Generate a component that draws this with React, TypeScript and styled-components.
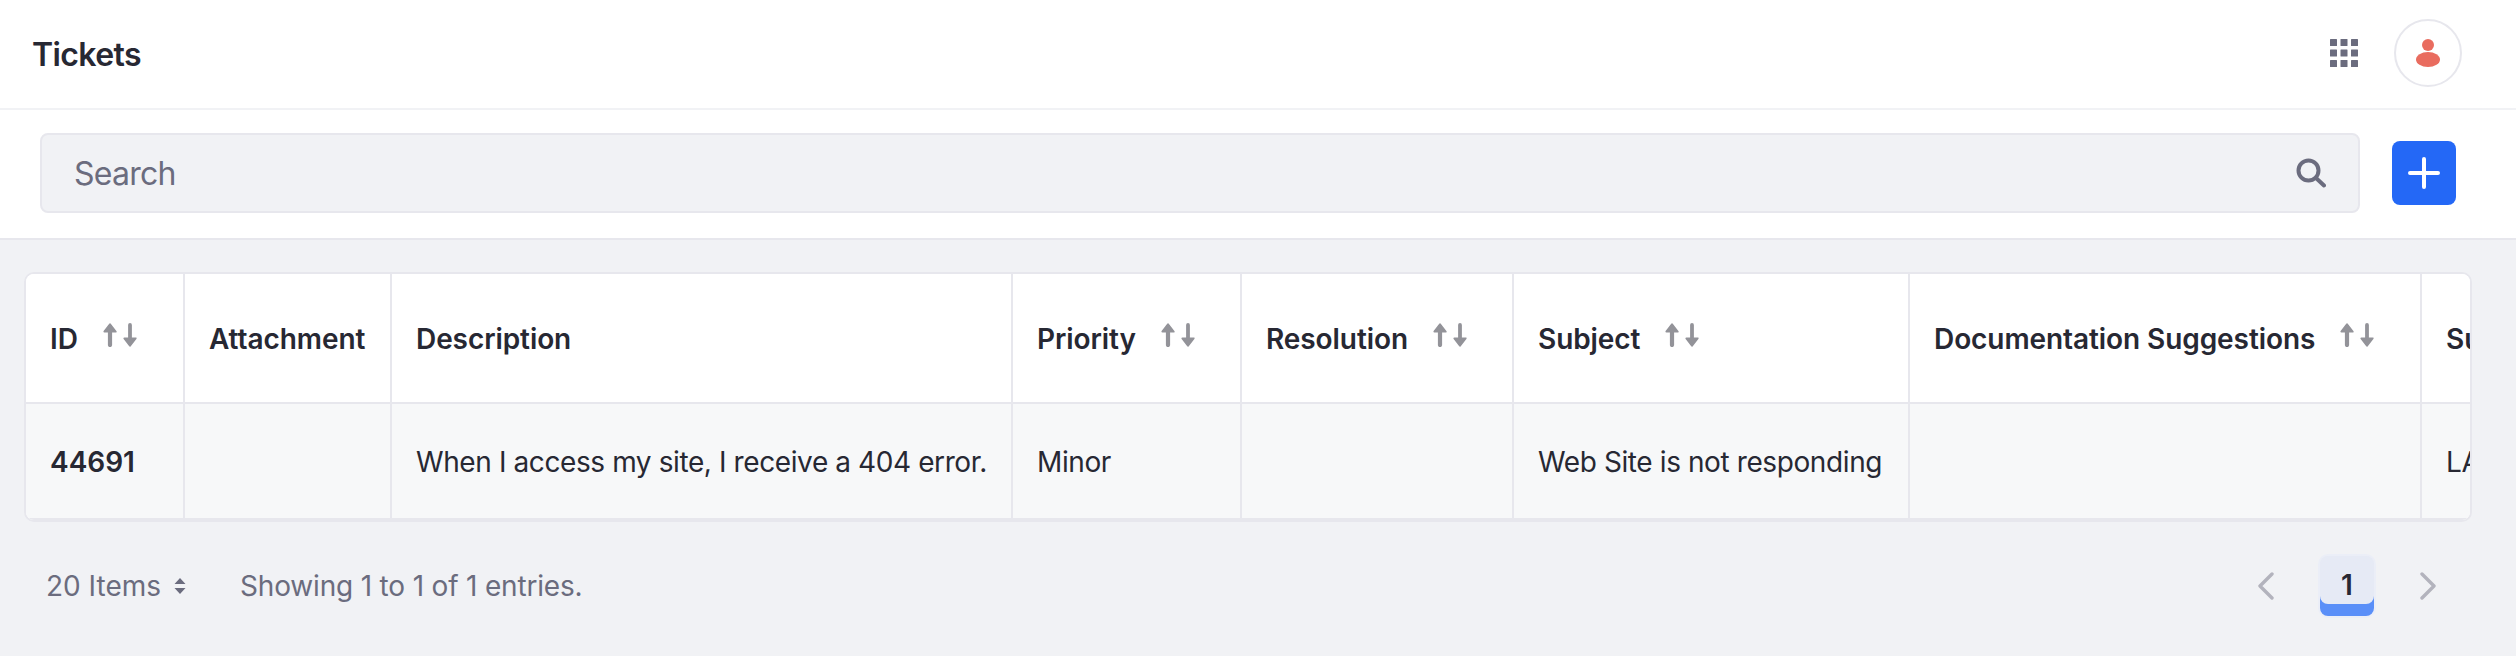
import React from "react";
import styled, { createGlobalStyle } from "styled-components";

const Global = createGlobalStyle`
  html, body { margin: 0; padding: 0; background: #f1f2f5; }
  * { box-sizing: border-box; }
  body { font-family: Inter, "Liberation Sans", sans-serif; color: #272833; overflow: hidden; }
`;

const Page = styled.div`
  width: 2516px;
  height: 656px;
  overflow: hidden;
  background: #f1f2f5;
`;

const TopBar = styled.header`
  height: 110px;
  padding: 0 54px 2px 32px;
  display: flex;
  align-items: center;
  justify-content: space-between;
  background: #fff;
  border-bottom: 2px solid #f1f2f5;
`;

const Title = styled.h1`
  margin: 4px 0 0;
  font-size: 32px;
  font-weight: 600;
  line-height: 1;
  letter-spacing: -0.6px;
`;

const TopActions = styled.div`
  display: flex;
  align-items: center;
  gap: 36px;
`;

const Avatar = styled.div`
  width: 68px;
  height: 68px;
  border: 2px solid #e7e7ed;
  border-radius: 50%;
  display: flex;
  align-items: center;
  justify-content: center;
  background: #fff;
`;

const SearchBar = styled.div`
  height: 130px;
  padding: 23px 60px 25px 40px;
  display: flex;
  align-items: center;
  gap: 32px;
  background: #fff;
  border-bottom: 2px solid #e7e7ed;
`;

const SearchField = styled.div`
  flex: 1;
  height: 80px;
  padding: 0 32px 0 32px;
  display: flex;
  align-items: center;
  justify-content: space-between;
  background: #f1f2f5;
  border: 2px solid #e7e7ed;
  border-radius: 8px;
`;

const Placeholder = styled.span`
  font-size: 32px;
  line-height: 1;
  letter-spacing: -0.75px;
  color: #6b6c7e;
  margin-top: 1px;
`;

const AddButton = styled.button`
  width: 64px;
  height: 64px;
  padding: 0;
  border: 0;
  border-radius: 8px;
  background: #2468f6;
  display: flex;
  align-items: center;
  justify-content: center;
`;

const Content = styled.main`
  padding: 32px 44px 0 24px;
`;

const TableFrame = styled.div`
  width: 2448px;
  overflow: hidden;
  background: #fff;
  border: 2px solid #e7e7ed;
  border-radius: 10px;
`;

const Table = styled.table`
  width: 2796px;
  table-layout: fixed;
  border-collapse: separate;
  border-spacing: 0;
`;

const HeadCell = styled.th`
  height: 130px;
  padding: 3px 0 0 24px;
  text-align: left;
  vertical-align: middle;
  font-size: 28px;
  font-weight: 600;
  line-height: 1.2;
  letter-spacing: -0.08px;
  white-space: nowrap;
  overflow: hidden;
  background: #fff;
  border-right: 2px solid #e7e7ed;
  border-bottom: 2px solid #e7e7ed;
`;

const BodyCell = styled.td<{ $strong?: boolean }>`
  height: 116px;
  padding: 3px 0 0 24px;
  vertical-align: middle;
  font-size: 28px;
  font-weight: ${(p) => (p.$strong ? 600 : 400)};
  letter-spacing: ${(p) => (p.$strong ? "0" : "-0.4px")};
  line-height: 1.2;
  white-space: nowrap;
  overflow: hidden;
  background: #f7f8f9;
  border-right: 2px solid #e7e7ed;
  border-bottom: 2px solid #e7e7ed;
`;

const HeadInner = styled.span`
  display: inline-flex;
  align-items: center;
  gap: 25px;
`;

const SortSvg = styled.svg`
  display: block;
  margin-top: -9px;
  flex: none;
`;

const Footer = styled.footer`
  padding: 32px 36px 0 22px;
  display: flex;
  align-items: center;
  justify-content: space-between;
`;

const Summary = styled.div`
  display: flex;
  align-items: center;
  gap: 54px;
  font-size: 28px;
  line-height: 1;
  color: #6b6c7e;
`;

const ItemsSelect = styled.span`
  display: inline-flex;
  align-items: center;
  gap: 13px;
`;

const EntriesText = styled.span`
  letter-spacing: -0.18px;
`;

const Pager = styled.nav`
  display: flex;
  align-items: center;
  gap: 44px;
`;

const PageNumber = styled.div`
  position: relative;
  width: 54px;
  height: 60px;
  margin: 2px;
  border-radius: 8px;
  background: linear-gradient(#e6eaf5 50%, #5a8ff8 50%);
  box-shadow: 0 0 0 2px #ebeef7;
  font-size: 28px;
  font-weight: 600;
  color: #272833;
`;

const PageFace = styled.span`
  display: flex;
  align-items: center;
  justify-content: center;
  height: 48px;
  padding-top: 10px;
  border-radius: 8px;
  background: #e6eaf5;
`;

const SortIcon = () => (
  <SortSvg width="34" height="24" viewBox="0 0 34 24" fill="none" stroke="#939399" strokeLinecap="round" strokeLinejoin="round" aria-hidden="true">
    <path d="M7 22V4" strokeWidth="4.2" />
    <path d="M1.4 8.6 7 1.4 12.6 8.6Z" fill="#939399" strokeWidth="2" />
    <path d="M27 2v18" strokeWidth="3.8" />
    <path d="M21.4 15.4 27 22.6 32.6 15.4Z" fill="#939399" strokeWidth="2" />
  </SortSvg>
);

const GridIcon = () => (
  <svg width="28" height="28" viewBox="0 0 28 28" fill="#6b6c7e" aria-hidden="true">
    {[0, 10.5, 21].map((y) =>
      [0, 10.5, 21].map((x) => <rect key={`${x}-${y}`} x={x} y={y} width="7" height="7" rx="0.5" />)
    )}
  </svg>
);

const PersonIcon = () => (
  <svg width="24" height="28" viewBox="0 0 24 28" fill="#e96c5f" aria-hidden="true">
    <circle cx="12" cy="6" r="6" />
    <ellipse cx="12" cy="20.5" rx="12" ry="7.5" />
  </svg>
);

const SearchIcon = () => (
  <svg width="30" height="30" viewBox="0 0 30 30" fill="none" stroke="#6b6c7e" strokeWidth="4" strokeLinecap="round" aria-hidden="true">
    <circle cx="12.5" cy="12.5" r="10" />
    <path d="M20 20l8 7.5" />
  </svg>
);

const PlusIcon = () => (
  <svg width="32" height="32" viewBox="0 0 32 32" fill="none" stroke="#fff" strokeWidth="4" strokeLinecap="round" aria-hidden="true">
    <path d="M16 2v28M2 16h28" />
  </svg>
);

const Chevron = ({ dir }: { dir: "left" | "right" }) => (
  <svg width="16" height="28" viewBox="0 0 16 28" fill="none" stroke="#b3b3bd" strokeWidth="3.4" strokeLinecap="round" strokeLinejoin="round" aria-hidden="true">
    <path d={dir === "left" ? "M14 2 2 14l12 12" : "M2 2l12 12L2 26"} />
  </svg>
);

const CaretIcon = () => (
  <svg width="12" height="16" viewBox="0 0 12 16" fill="#6b6c7e" aria-hidden="true">
    <path d="M6 0 11.5 6H.5ZM6 16 .5 10h11Z" />
  </svg>
);

const columns = [
  { label: "ID", width: 159, sort: true, value: "44691", strong: true },
  { label: "Attachment", width: 207, sort: false, value: "" },
  { label: "Description", width: 621, sort: false, value: "When I access my site, I receive a 404 error." },
  { label: "Priority", width: 229, sort: true, value: "Minor" },
  { label: "Resolution", width: 272, sort: true, value: "" },
  { label: "Subject", width: 396, sort: true, value: "Web Site is not responding" },
  { label: "Documentation Suggestions", width: 512, sort: true, value: "" },
  { label: "Support Region", width: 400, sort: false, value: "LATAM" },
];

export default function App() {
  return (
    <Page>
      <Global />
      <TopBar>
        <Title>Tickets</Title>
        <TopActions>
          <GridIcon />
          <Avatar>
            <PersonIcon />
          </Avatar>
        </TopActions>
      </TopBar>
      <SearchBar>
        <SearchField>
          <Placeholder>Search</Placeholder>
          <SearchIcon />
        </SearchField>
        <AddButton aria-label="Add">
          <PlusIcon />
        </AddButton>
      </SearchBar>
      <Content>
        <TableFrame>
          <Table>
            <colgroup>
              {columns.map((c) => (
                <col key={c.label} style={{ width: c.width }} />
              ))}
            </colgroup>
            <thead>
              <tr>
                {columns.map((c) => (
                  <HeadCell key={c.label}>
                    <HeadInner>
                      {c.label}
                      {c.sort && <SortIcon />}
                    </HeadInner>
                  </HeadCell>
                ))}
              </tr>
            </thead>
            <tbody>
              <tr>
                {columns.map((c) => (
                  <BodyCell key={c.label} $strong={c.strong}>
                    {c.value}
                  </BodyCell>
                ))}
              </tr>
            </tbody>
          </Table>
        </TableFrame>
        <Footer>
          <Summary>
            <ItemsSelect>
              20 Items
              <CaretIcon />
            </ItemsSelect>
            <EntriesText>Showing 1 to 1 of 1 entries.</EntriesText>
          </Summary>
          <Pager>
            <Chevron dir="left" />
            <PageNumber>
              <PageFace>1</PageFace>
            </PageNumber>
            <Chevron dir="right" />
          </Pager>
        </Footer>
      </Content>
    </Page>
  );
}
